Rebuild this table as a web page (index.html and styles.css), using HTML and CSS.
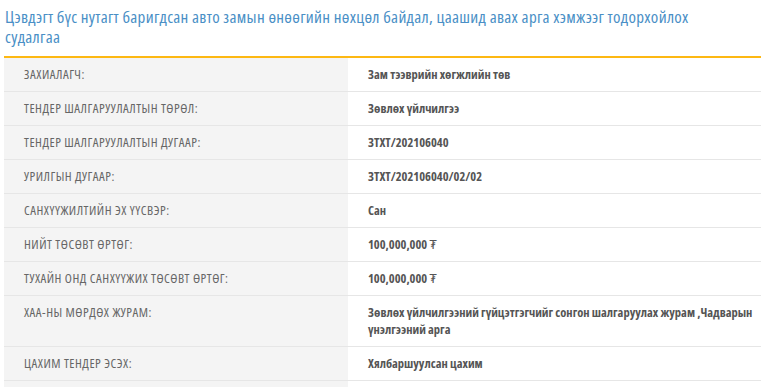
FILE: index.html
```html
<!DOCTYPE html>
<html lang="mn">
<head>
<meta charset="utf-8">
<title>Тендер</title>
<link rel="stylesheet" href="styles.css">
</head>
<body>
<div class="page">
  <h1 class="title">Цэвдэгт бүс нутагт баригдсан авто замын өнөөгийн нөхцөл байдал, цаашид авах арга хэмжээг тодорхойлох судалгаа</h1>
  <table class="info">
    <tbody>
      <tr><th>ЗАХИАЛАГЧ:</th><td>Зам тээврийн хөгжлийн төв</td></tr>
      <tr><th>ТЕНДЕР ШАЛГАРУУЛАЛТЫН ТӨРӨЛ:</th><td>Зөвлөх үйлчилгээ</td></tr>
      <tr><th>ТЕНДЕР ШАЛГАРУУЛАЛТЫН ДУГААР:</th><td>ЗТХТ/202106040</td></tr>
      <tr><th>УРИЛГЫН ДУГААР:</th><td>ЗТХТ/202106040/02/02</td></tr>
      <tr><th>САНХҮҮЖИЛТИЙН ЭХ ҮҮСВЭР:</th><td>Сан</td></tr>
      <tr><th>НИЙТ ТӨСӨВТ ӨРТӨГ:</th><td>100,000,000 <span class="cur">₮</span></td></tr>
      <tr><th>ТУХАЙН ОНД САНХҮҮЖИХ ТӨСӨВТ ӨРТӨГ:</th><td>100,000,000 <span class="cur">₮</span></td></tr>
      <tr><th>ХАА-НЫ МӨРДӨХ ЖУРАМ:</th><td>Зөвлөх үйлчилгээний гүйцэтгэгчийг сонгон шалгаруулах журам ,Чадварын үнэлгээний арга</td></tr>
      <tr><th>ЦАХИМ ТЕНДЕР ЭСЭХ:</th><td>Хялбаршуулсан цахим</td></tr>
      <tr><th>ТЕНДЕРИЙН ХЭЛ:</th><td>Монгол</td></tr>
    </tbody>
  </table>
</div>
</body>
</html>
```
FILE: styles.css
```css
html, body {
  margin: 0;
  padding: 0;
  background: #fff;
}
.page {
  padding: 7px 0 0 4px;
  font-family: "Open Sans", "DejaVu Sans Condensed", sans-serif;
  font-stretch: 75%;
}
.title {
  margin: 0 24px 9px 1px;
  font-size: 17px;
  letter-spacing: 0.3px;
  line-height: 20px;
  font-weight: normal;
  color: #4a8fc6;
  font-stretch: 75%;
}
.info {
  width: 100%;
  border-collapse: collapse;
  border-top: 2px solid #fdb813;
}
.info th {
  width: 344px;
  box-sizing: border-box;
  background: #f4f4f4;
  color: #666;
  font-size: 13px;
  letter-spacing: 0.5px;
  font-weight: normal;
  font-stretch: 75%;
  text-align: left;
  vertical-align: top;
  padding: 8px 0 8px 20px;
  line-height: 17px;
  border-bottom: 1px solid #e6e6e6;
}
.info td {
  color: #555;
  font-size: 12.5px;
  font-weight: bold;
  font-stretch: 75%;
  vertical-align: top;
  padding: 8px 0 8px 20px;
  line-height: 17px;
  border-bottom: 1px solid #e6e6e6;
}
.cur {
  font-weight: normal;
}
```
